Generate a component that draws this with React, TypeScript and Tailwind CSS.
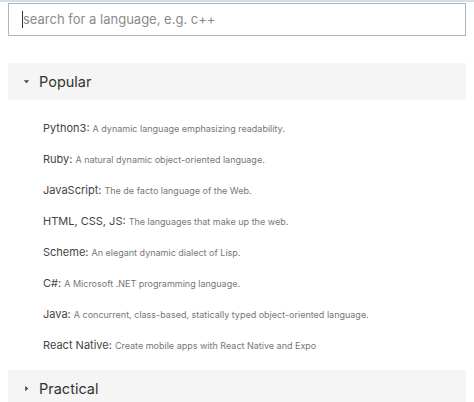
import { ChevronDown } from 'lucide-react';

const languages = [
  { name: 'Python3', desc: 'A dynamic language emphasizing readability.' },
  { name: 'Ruby', desc: 'A natural dynamic object-oriented language.' },
  { name: 'JavaScript', desc: 'The de facto language of the Web.' },
  { name: 'HTML, CSS, JS', desc: 'The languages that make up the web.' },
  { name: 'Scheme', desc: 'An elegant dynamic dialect of Lisp.' },
  { name: 'C#', desc: 'A Microsoft .NET programming language.' },
  { name: 'Java', desc: 'A concurrent, class-based, statically typed object-oriented language.' },
  { name: 'React Native', desc: 'Create mobile apps with React Native and Expo' },
];

function Caret({ open }: { open: boolean }) {
  return (
    <svg width="7" height="7" viewBox="0 0 8 8" className="shrink-0 fill-[#444]">
      {open ? <path d="M1 2.5h6L4 6z" /> : <path d="M2.5 1v6L6 4z" />}
    </svg>
  );
}

export default function App() {
  return (
    <div className="min-h-screen bg-white font-['Inter',sans-serif]">
      <div className="h-[2px] bg-[#d5dde5]" />
      <div className="px-2 pt-px">
        {/* Search */}
        <div className="flex h-[33px] items-center border border-[#aab8c6] bg-white pl-[13px]">
          <span className="h-[17px] w-px bg-[#333]" />
          <span className="text-[13px] text-[#8a8a8a]">search for a language, e.g. c++</span>
        </div>

        {/* Popular */}
        <div className="mt-[27px] flex h-[37px] items-center gap-[9px] bg-[#f5f5f5] pl-[15px]">
          <Caret open />
          <span className="text-[14.5px] text-[#333]">Popular</span>
        </div>
        <ul className="flex flex-col pt-[13px] pl-[35px]">
          {languages.map((l) => (
            <li key={l.name} className="flex h-[31px] items-center">
              <span className="text-[11px] text-[#444]">{l.name}:</span>
              <span className="ml-[3px] text-[9px] text-[#777]">{l.desc}</span>
            </li>
          ))}
        </ul>

        {/* Practical */}
        <div className="mt-[9px] flex h-[37px] items-center gap-[9px] bg-[#f5f5f5] pl-[15px]">
          <Caret open={false} />
          <span className="text-[14.5px] text-[#333]">Practical</span>
        </div>
      </div>
    </div>
  );
}
